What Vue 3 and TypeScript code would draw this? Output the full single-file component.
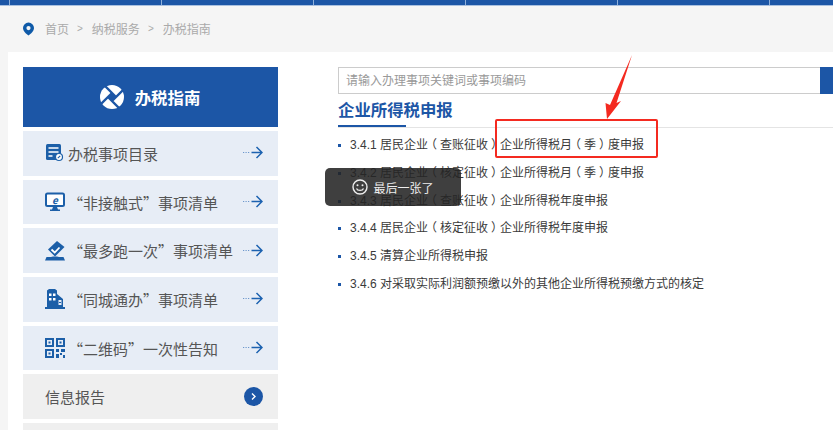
<template>
  <div class="page">
    <div class="top-bar">
      <span v-for="n in 6" :key="n" class="top-cell"></span>
    </div>

    <nav class="crumbs">
      <svg class="pin" width="11" height="14" viewBox="0 0 12 14">
        <path fill="#0f5aa8" fill-rule="evenodd" d="M6 0a6 6 0 0 1 6 6c0 3.200-3.400 6.500-6 8C3.400 12.500 0 9.200 0 6a6 6 0 0 1 6-6zm0 3.700a2.300 2.300 0 1 0 0 4.600 2.300 2.300 0 0 0 0-4.600z" />
      </svg>
      <span>首页</span>
      <span class="sep">&gt;</span>
      <span>纳税服务</span>
      <span class="sep">&gt;</span>
      <span>办税指南</span>
    </nav>

    <div class="panel">
      <aside class="side">
        <div class="side-head">
          <svg width="24" height="24" viewBox="0 0 24 24">
            <circle cx="12" cy="12" r="12" fill="#fff" />
            <path d="M4 0 L16 12 M24 4 L12 16 M20 24 L8 12 M0 20 L12 8" stroke="#1c56a6" stroke-width="2.400" fill="none" />
            <path d="M12 8 L16 12 L12 16 L8 12 Z" fill="#1c56a6" />
          </svg>
          <span>办税指南</span>
        </div>

        <a v-for="item in guideItems" :key="item.label" class="side-item">
          <svg class="item-icon" width="20" height="20" viewBox="0 0 20 20">
            <g v-if="item.icon === 'list'">
              <rect x="1" y="1" width="15" height="16" rx="1.500" fill="#1c5fa8" />
              <path d="M3.500 5h10M3.500 9h10M3.500 13h4" stroke="#fff" stroke-width="1.400" />
              <circle cx="14" cy="14" r="3.500" fill="#fff" stroke="#1c5fa8" stroke-width="1.200" />
              <path d="M12.800 15.200l2.400-2.400" stroke="#1c5fa8" stroke-width="1.200" />
            </g>
            <g v-else-if="item.icon === 'screen'">
              <rect x="1" y="1.500" width="18" height="12.500" rx="1.500" fill="#fff" stroke="#1c5fa8" stroke-width="2" />
              <text x="10" y="11.500" text-anchor="middle" class="e-mark">e</text>
              <path d="M8 15h4l1 2.500h2V19H5v-1.500h2z" fill="#1c5fa8" />
            </g>
            <g v-else-if="item.icon === 'stamp'">
              <path d="M12 0 L19.500 6 L10 15.500 L3 8.500 Z" fill="#1c5fa8" />
              <path d="M6.500 8.500 L9.700 11.500 L14.500 6.500" stroke="#fff" stroke-width="1.800" fill="none" />
              <path d="M1.500 16 H6 L8 15.500 H12 L14 16 H18.500 L20 19.500 H0 Z" fill="#1c5fa8" />
            </g>
            <g v-else-if="item.icon === 'building'">
              <path d="M2 18V1.500L4 0h6l2 1.500V5l6 5v8z" fill="#1c5fa8" />
              <path d="M13.500 11h3v5h-3z" fill="#e7edf6" />
              <path d="M14 13h2v1h-2z" fill="#1c5fa8" />
              <path d="M4 4.500h2.500V7H4zM8 4.500h2.500V7H8zM4 9h2.500v2.500H4zM8 9h2.500v2.500H8z" fill="#fff" />
              <path d="M0 18h20v2H0z" fill="#1c5fa8" />
            </g>
            <g v-else>
              <path fill="#1c5fa8" fill-rule="evenodd" d="M0 0h9v9H0zM2 2v5h5V2zM11 0h9v9h-9zM13 2v5h5V2zM0 11h9v9H0zM2 13v5h5v-5zM3.500 3.500h2v2h-2zM14.500 3.500h2v2h-2zM3.500 14.500h2v2h-2zM11 11h3v3h-3zM16 11h4v3h-4zM11 16h3v4h-3zM15 15h2v2h-2zM18 17h2v3h-2z" />
            </g>
          </svg>
          <span class="item-label">{{ item.label }}</span>
          <svg class="go-arrow" width="21" height="13" viewBox="0 0 21 13">
            <path d="M1 6.500h1.200M3.500 6.500h1.200M6 6.500h1.200" stroke="#6d97cc" stroke-width="1.200" />
            <path d="M9.500 6.500h10M14.500 1l5.500 5.500L14.500 12" stroke="#1c62b0" stroke-width="1.500" fill="none" />
          </svg>
        </a>

        <a class="side-item plain">
          <span class="item-label">信息报告</span>
          <svg width="19" height="19" viewBox="0 0 19 19">
            <circle cx="9.500" cy="9.500" r="9.500" fill="#1c56a6" />
            <path d="M8 6.500l3 3-3 3" stroke="#fff" stroke-width="1.400" fill="none" />
          </svg>
        </a>
        <a class="side-item plain"></a>
      </aside>

      <main class="content">
        <div class="search">
          <input type="text" placeholder="请输入办理事项关键词或事项编码" />
          <button aria-label="search"></button>
        </div>

        <div class="title-row">
          <h2>企业所得税申报</h2>
        </div>

        <ul class="tax-list">
          <li v-for="row in taxRows" :key="row">
            <span v-for="(part, i) in splitParens(row)" :key="i" :class="{ paren: isParen(part) }">{{ part }}</span>
          </li>
        </ul>
      </main>
    </div>

    <div class="toast">
      <svg width="16" height="16" viewBox="0 0 16 16">
        <circle cx="8" cy="8" r="7" fill="none" stroke="#eee" stroke-width="1.400" />
        <circle cx="5.500" cy="6.200" r="1" fill="#eee" />
        <circle cx="10.500" cy="6.200" r="1" fill="#eee" />
        <path d="M4.500 9.500c1 2.600 6 2.600 7 0" stroke="#eee" stroke-width="1.300" fill="none" />
      </svg>
      <span>最后一张了</span>
    </div>

    <!-- annotation drawn on top of the screenshot -->
    <div class="mark-box"></div>
    <svg class="mark-arrow" width="40" height="70" viewBox="0 0 40 70">
      <path d="M32 5 L16.500 53 L21 51 L7 69 L5.500 53 L10 55 Z" fill="#f42a20" />
    </svg>
  </div>
</template>

<script setup lang="ts">
const guideItems = [
  { label: '办税事项目录', icon: 'list' },
  { label: '“非接触式”事项清单', icon: 'screen' },
  { label: '“最多跑一次”事项清单', icon: 'stamp' },
  { label: '“同城通办”事项清单', icon: 'building' },
  { label: '“二维码”一次性告知', icon: 'qr' },
]

const taxRows = [
  '3.4.1 居民企业（查账征收）企业所得税月（季）度申报',
  '3.4.2 居民企业（核定征收）企业所得税月（季）度申报',
  '3.4.3 居民企业（查账征收）企业所得税年度申报',
  '3.4.4 居民企业（核定征收）企业所得税年度申报',
  '3.4.5 清算企业所得税申报',
  '3.4.6 对采取实际利润额预缴以外的其他企业所得税预缴方式的核定',
]

// brackets sit in the middle of their cell in the design, the font pushes them to one side
function splitParens(row: string) {
  return row.split(/([（）])/).filter(part => part)
}

function isParen(part: string) {
  return part === '（' || part === '）'
}
</script>

<style>
html,
body {
  margin: 0;
  background: #f5f5f5;
  overflow: hidden;
}
</style>

<style scoped>
.page {
  position: relative;
  width: 833px;
  height: 430px;
  overflow: hidden;
  background: #f5f5f5;
  font-family: "Liberation Sans", "Noto Sans CJK SC", sans-serif;
}

.top-bar {
  display: flex;
  height: 5px;
  padding-left: 9px;
  background: #1c56a6;
  border-bottom: 1px solid #a9c0df;
}

.top-cell {
  flex: 0 0 152px;
  box-sizing: border-box;
  border-left: 1px solid #8fb0da;
}

.crumbs {
  display: flex;
  align-items: center;
  box-sizing: border-box;
  height: 46px;
  padding: 0 0 1px 23px;
  font-size: 12px;
  color: #aaa;
}

.pin {
  margin-right: 11px;
}

.sep {
  margin: 0 9px 0 8px;
  font-size: 10px;
}

.panel {
  display: flex;
  margin-left: 8px;
  padding: 15px 0 0 15px;
  height: 378px;
  background: #fff;
}

.side {
  flex: 0 0 255px;
  display: flex;
  flex-direction: column;
  gap: 4px;
}

.side-head {
  display: flex;
  align-items: center;
  justify-content: center;
  gap: 11px;
  flex: 0 0 60px;
  padding-right: 1px;
  box-sizing: border-box;
  background: #1c56a6;
  color: #fff;
  font-size: 16.400px;
  font-weight: 700;
}

.side-item {
  display: flex;
  align-items: center;
  flex: 0 0 44.7px;
  padding: 0 15px 0 22px;
  background: #e7edf6;
  color: #555;
  font-family: "Noto Sans CJK SC", sans-serif;
  font-size: 15px;
}

.item-icon {
  flex: none;
  margin-right: 3px;
}

.item-label {
  flex: 1;
  white-space: nowrap;
}

.go-arrow {
  flex: none;
  margin-top: -1px;
}

.e-mark {
  font-size: 10px;
  font-weight: 700;
  font-style: italic;
  fill: #1c5fa8;
}

.plain {
  background: #efefef;
}

.content {
  flex: 1;
  padding-left: 60px;
  min-width: 0;
}

.search {
  display: flex;
  height: 27px;
}

.search input {
  flex: 1;
  min-width: 0;
  box-sizing: border-box;
  height: 27px;
  padding: 0 8px 0 7px;
  border: 1px solid #ccc;
  border-right: 0;
  outline: 0;
  font: inherit;
  font-size: 12px;
}

.search input::placeholder {
  color: #999;
}

.search button {
  flex: 0 0 13px;
  border: 0;
  padding: 0;
  background: #1c56a6;
}

.title-row {
  height: 33px;
  border-bottom: 1px solid #e4e4e4;
}

.title-row h2 {
  display: inline-block;
  box-sizing: border-box;
  height: 33px;
  width: 68px;
  margin: 0;
  white-space: nowrap;
  border-bottom: 2px solid #1c56a6;
  color: #1c56a6;
  font-size: 16.400px;
  line-height: 32px;
}

.tax-list {
  margin: 4px 0 0;
  padding: 0;
  list-style: none;
}

.tax-list li {
  position: relative;
  height: 27.8px;
  padding-left: 12px;
  color: #3a3a3a;
  font-size: 12px;
  line-height: 27.8px;
  white-space: nowrap;
}

.tax-list li::before {
  content: "";
  position: absolute;
  left: 0;
  top: 12px;
  width: 3px;
  height: 3px;
  background: #1c56a6;
}

.paren {
  display: inline-block;
  width: 12px;
  text-align: center;
  font-feature-settings: "halt";
}

.toast {
  position: absolute;
  left: 325px;
  top: 168px;
  width: 136px;
  height: 38px;
  display: flex;
  align-items: center;
  justify-content: center;
  gap: 5px;
  border-radius: 5px;
  background: rgba(36, 36, 36, 0.88);
  color: #eee;
  font-size: 12px;
}

.mark-box {
  position: absolute;
  left: 495px;
  top: 119px;
  width: 159px;
  height: 35px;
  border: 2px solid #f42a20;
  border-radius: 2px;
}

.mark-arrow {
  position: absolute;
  left: 600px;
  top: 50px;
}
</style>
